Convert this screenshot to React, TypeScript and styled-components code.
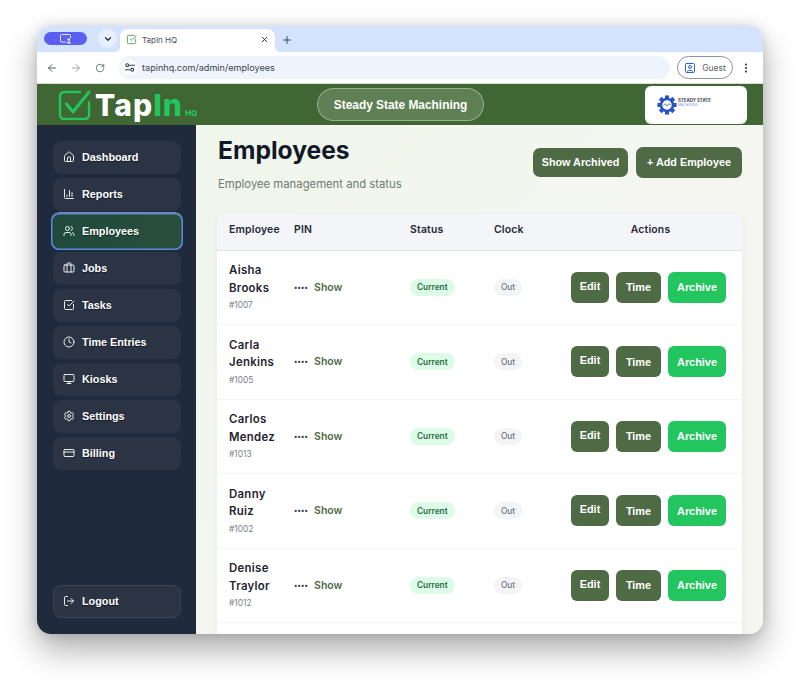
import React from 'react'
import styled, { createGlobalStyle } from 'styled-components'
import {
  ArrowLeft,
  ArrowRight,
  Briefcase,
  ChartColumn,
  ChevronDown,
  Clock,
  CreditCard,
  EllipsisVertical,
  House,
  LogOut,
  Monitor,
  Plus,
  RotateCw,
  Settings,
  SquareCheckBig,
  SquareUser,
  Users,
  X,
} from 'lucide-react'

const GlobalStyle = createGlobalStyle`
  html, body {
    margin: 0;
    padding: 0;
    background: #fff;
  }
  * {
    box-sizing: border-box;
  }
`

const Page = styled.div`
  width: 800px;
  height: 683px;
  padding: 26px 37px 49px;
  overflow: hidden;
  font-family: 'Liberation Sans', Arial, sans-serif;
`

const BrowserWindow = styled.div`
  width: 726px;
  height: 608px;
  border-radius: 14px;
  overflow: hidden;
  display: flex;
  flex-direction: column;
  box-shadow: 0 16px 32px rgba(0, 0, 0, 0.32), 0 0 12px rgba(0, 0, 0, 0.14);
`

const TabStrip = styled.div`
  height: 26px;
  flex: none;
  background: #d3e3fd;
  display: flex;
  align-items: flex-end;
  padding-left: 7px;
`

const ProfilePill = styled.div`
  width: 43px;
  height: 13px;
  margin-bottom: 7px;
  border-radius: 7px;
  background: #5b5ef0;
  display: flex;
  align-items: center;
  justify-content: center;
`

const TabSearch = styled.div`
  width: 19px;
  height: 19px;
  margin: 0 3px 4px 11px;
  border-radius: 50%;
  background: #e7effc;
  color: #1f2937;
  display: flex;
  align-items: center;
  justify-content: center;
`

const Tab = styled.div`
  position: relative;
  width: 155px;
  height: 23px;
  border-radius: 8px 8px 0 0;
  background: #fff;
  display: flex;
  align-items: center;
  padding: 0 6px 2px;
  color: #47505c;
  font-family: Inter, sans-serif;
  font-size: 8px;

  &::before,
  &::after {
    content: '';
    position: absolute;
    bottom: 0;
    width: 6px;
    height: 6px;
  }

  &::before {
    left: -6px;
    background: radial-gradient(circle at 0 0, transparent 6px, #fff 6.5px);
  }

  &::after {
    right: -6px;
    background: radial-gradient(circle at 100% 0, transparent 6px, #fff 6.5px);
  }
`

const TabTitle = styled.span`
  margin-left: 5px;
  flex: 1;
`

const NewTab = styled.div`
  margin: 0 0 6px 6px;
  height: 14px;
  color: #3c4657;
`

const Toolbar = styled.div`
  height: 31px;
  flex: none;
  background: #fff;
  display: flex;
  align-items: center;
  padding-left: 3px;
  color: #59616e;
`

const NavButton = styled.div<{ $dim?: boolean }>`
  width: 24px;
  display: flex;
  justify-content: center;
  opacity: ${(p) => (p.$dim ? 0.55 : 1)};
`

const Omnibox = styled.div`
  width: 551px;
  height: 23px;
  margin-left: 7px;
  border-radius: 12px;
  background: #eff3fb;
  display: flex;
  align-items: center;
  padding-left: 2px;
  gap: 4px;
  font-family: Inter, sans-serif;
  font-size: 9.1px;
  color: #3c4350;
`

const SiteIcon = styled.span`
  width: 17px;
  height: 17px;
  border-radius: 50%;
  background: #f8fafe;
  display: flex;
  align-items: center;
  justify-content: center;
`

const GuestChip = styled.div`
  width: 56px;
  height: 23px;
  margin-left: 7px;
  border: 1px solid #8d939c;
  border-radius: 12px;
  display: flex;
  align-items: center;
  justify-content: center;
  gap: 6px;
  font-family: Inter, sans-serif;
  font-size: 8.5px;
  color: #59616e;

  svg {
    color: #2b62d9;
  }
`

const MenuDots = styled.div`
  margin-left: 7px;
  display: flex;
  color: #3c4350;
`

const AppHeader = styled.header`
  height: 42px;
  flex: none;
  background: #3f6633;
  border-top: 1px solid #d7dcd4;
  display: grid;
  grid-template-columns: 259px 167px 1fr;
  grid-template-rows: 41px;
  align-items: center;
  padding-left: 21px;
`

const Brand = styled.div`
  display: flex;
  align-items: center;
  gap: 4px;
`

const BrandText = styled.div`
  font-family: Inter, sans-serif;
  font-weight: 800;
  font-size: 30px;
  line-height: 34px;
  height: 34px;
  letter-spacing: 1.1px;
  color: #fff;
  white-space: nowrap;
`

const BrandAccent = styled.span`
  color: #22c55e;
`

const BrandSuffix = styled.span`
  margin-left: 2px;
  color: #22c55e;
  font-size: 8px;
  line-height: 8px;
  letter-spacing: 0;
`

const CompanyPill = styled.div`
  height: 33px;
  border-radius: 17px;
  border: 1px solid rgba(255, 255, 255, 0.38);
  background: rgba(255, 255, 255, 0.17);
  color: #fff;
  font-weight: 700;
  font-size: 11.9px;
  display: flex;
  align-items: center;
  justify-content: center;
`

const CompanyCard = styled.div`
  justify-self: end;
  width: 102px;
  height: 38px;
  margin-right: 16px;
  border-radius: 6px;
  background: #fff;
  display: flex;
  align-items: center;
  padding-left: 12px;
  gap: 1px;
`

const CompanyName = styled.div`
  font-family: Inter, sans-serif;
  font-size: 4.4px;
  line-height: 5px;
  font-weight: 700;
  color: #3c4250;
  white-space: nowrap;
`

const CompanySub = styled.div`
  font-size: 3.2px;
  line-height: 5px;
  color: #6f8fee;
  letter-spacing: 0.2px;
  margin-bottom: 3px;
`

const Body = styled.div`
  flex: 1;
  min-height: 0;
  display: flex;
`

const Sidebar = styled.nav`
  width: 159px;
  flex: none;
  background: #1f2a3c;
  display: flex;
  flex-direction: column;
  padding: 16px 15px 16px 16px;
`

const NavList = styled.div`
  display: flex;
  flex-direction: column;
  gap: 4px;
`

const NavItem = styled.div<{ $active?: boolean }>`
  height: 33px;
  border-radius: 8px;
  display: flex;
  align-items: center;
  gap: 7px;
  padding: 0 0 1px 10px;
  color: #fff;
  font-weight: 700;
  font-size: 10.8px;
  text-shadow: 0 1px 1px rgba(0, 0, 0, 0.5);
  background: #2a3445;
  ${(p) =>
    p.$active
      ? `
    background: linear-gradient(100deg, #1f4a3d, #2a4f3b);
    height: 37px;
    margin: -2px;
    padding-left: 12px;
    box-shadow: inset 0 0 0 1.5px #5b8ae0, 0 -0.5px 0 #dfe8f5;
  `
      : ''}
`

const LogoutItem = styled(NavItem)`
  margin-top: auto;
  border: 1px solid #3b4657;
  padding-left: 9px;
`

const Main = styled.main`
  flex: 1;
  min-width: 0;
  overflow: hidden;
  background: linear-gradient(135deg, #eff6ea, #f5f6f2 50%);
  padding: 0 21px;
`

const TitleRow = styled.div`
  display: flex;
  justify-content: space-between;
  align-items: flex-start;
  height: 88.5px;
`

const Title = styled.h1`
  margin: 9px 0 0 1px;
  font-family: Inter, sans-serif;
  font-size: 24.6px;
  line-height: 32px;
  font-weight: 700;
  color: #111827;
`

const Subtitle = styled.p`
  margin: 10px 0 0 1px;
  font-family: Inter, sans-serif;
  font-size: 11.3px;
  line-height: 16px;
  color: #6f7a70;
`

const HeaderActions = styled.div`
  display: flex;
  align-items: center;
  gap: 8px;
  margin-top: 22px;
`

const PrimaryButton = styled.button<{ $large?: boolean }>`
  border: 0;
  border-radius: 7px;
  background: #4f6b46;
  color: #fff;
  font-family: 'Liberation Sans', Arial, sans-serif;
  font-weight: 700;
  font-size: 10.8px;
  height: ${(p) => (p.$large ? 31 : 29)}px;
  width: ${(p) => (p.$large ? 106 : 95)}px;
  padding: 0 0 2px;
`

const Table = styled.div`
  background: #fff;
  border-radius: 8px 8px 0 0;
  min-height: 600px;
  box-shadow: 0 2px 8px rgba(0, 0, 0, 0.05);
`

const TableGrid = styled.div`
  display: grid;
  grid-template-columns: 65px 116px 84px 65px 1fr;
  align-items: center;
  padding-left: 12px;
`

const HeadRow = styled(TableGrid)`
  height: 37px;
  padding-bottom: 5px;
  background: #f3f5f8;
  border-bottom: 1px solid #e2e5e9;
  border-radius: 8px 8px 0 0;
  font-family: Inter, sans-serif;
  font-size: 10.4px;
  letter-spacing: 0.2px;
  font-weight: 600;
  color: #1f2937;
`

const ActionsHead = styled.div`
  text-align: center;
`

const Row = styled(TableGrid)`
  height: 74.5px;
  border-bottom: 1px solid #f4f5f6;
`

const Name = styled.div`
  font-family: Inter, sans-serif;
  font-size: 11.4px;
  line-height: 17.5px;
  letter-spacing: 0.3px;
  font-weight: 600;
  color: #1f2430;
`

const EmployeeId = styled.div`
  font-family: Inter, sans-serif;
  font-size: 8.4px;
  line-height: 13px;
  margin-top: 2px;
  color: #7a808a;
`

const Pin = styled.div`
  display: flex;
  align-items: center;
  gap: 6px;
  font-family: Inter, sans-serif;
  font-size: 10.5px;
  font-weight: 600;
  color: #4f6b46;
`

const PinDots = styled.span`
  color: #374151;
  font-size: 7px;
  font-weight: 700;
  letter-spacing: 0.2px;
`

const Badge = styled.span<{ $tone: 'green' | 'gray' }>`
  display: inline-flex;
  align-items: center;
  height: 17px;
  padding: 0 7px;
  border-radius: 9px;
  font-family: Inter, sans-serif;
  font-size: 8.3px;
  font-weight: ${(p) => (p.$tone === 'green' ? 600 : 500)};
  background: ${(p) => (p.$tone === 'green' ? '#dcfce7' : '#f3f4f6')};
  color: ${(p) => (p.$tone === 'green' ? '#2f6b45' : '#6b7280')};
`

const BadgeCell = styled.div`
  display: flex;
`

const Actions = styled.div`
  display: flex;
  gap: 7px;
  padding-left: 12px;
`

const RowButton = styled.button<{ $green?: boolean; $width: number; $raised?: boolean }>`
  width: ${(p) => p.$width}px;
  height: 31px;
  border: 0;
  border-radius: 6px;
  background: ${(p) => (p.$green ? '#22c55e' : '#4f6b46')};
  color: #fff;
  font-family: 'Liberation Sans', Arial, sans-serif;
  font-weight: 700;
  font-size: 10.9px;
  padding: 0 0 ${(p) => (p.$raised ? 3 : 0)}px;
`

const LogoMark = () => (
  <svg width="33" height="30" viewBox="0 0 33 30" fill="none" stroke="#22c55e" strokeWidth="2.4" strokeLinecap="round" strokeLinejoin="round">
    <path d="M22 2H6a4 4 0 0 0-4 4v19a4 4 0 0 0 4 4h21a4 4 0 0 0 4-4V12" />
    <path d="M8.500 14l6.500 8L31 2" strokeWidth="3" />
  </svg>
)

const GearLogo = () => (
  <svg width="20" height="20" viewBox="0 0 24 24">
    <g fill="#2b55c4">
      {[0, 45, 90, 135, 180, 225, 270, 315].map((a) => (
        <rect key={a} x="9.600" y="0.500" width="4.800" height="5" transform={`rotate(${a} 12 12)`} />
      ))}
    </g>
    <circle cx="12" cy="12" r="7.200" fill="#fff" stroke="#2b55c4" strokeWidth="3" />
    <path d="M7.500 12.500l2.500-2 2 3 2-3 2.500 1.500" fill="none" stroke="#5b6b8c" strokeWidth="1" />
  </svg>
)

const ProfileIcon = () => (
  <svg width="13" height="10" viewBox="0 0 13 10" fill="none" stroke="#e6e8ff" strokeWidth="1">
    <path d="M7 8H2.500a1 1 0 0 1-1-1V1.500a1 1 0 0 1 1-1h8a1 1 0 0 1 1 1V4" />
    <circle cx="9.800" cy="5.600" r="1.300" fill="#e6e8ff" stroke="none" />
    <path d="M7.800 9.500c0-1.300 1-1.900 2-1.900s2 .6 2 1.900z" fill="#e6e8ff" stroke="none" />
  </svg>
)

const TuneIcon = () => (
  <svg width="10" height="9" viewBox="0 0 10 9" fill="none" stroke="#3c4350" strokeWidth="1.100" strokeLinecap="round">
    <path d="M4.500 2.200H9.500M.500 6.800H5" />
    <circle cx="2.200" cy="2.200" r="1.400" />
    <circle cx="7.300" cy="6.800" r="1.400" />
  </svg>
)

const navItems = [
  { label: 'Dashboard', icon: House },
  { label: 'Reports', icon: ChartColumn },
  { label: 'Employees', icon: Users, active: true },
  { label: 'Jobs', icon: Briefcase },
  { label: 'Tasks', icon: SquareCheckBig },
  { label: 'Time Entries', icon: Clock },
  { label: 'Kiosks', icon: Monitor },
  { label: 'Settings', icon: Settings },
  { label: 'Billing', icon: CreditCard },
]

const employees = [
  { first: 'Aisha', last: 'Brooks', id: '#1007' },
  { first: 'Carla', last: 'Jenkins', id: '#1005' },
  { first: 'Carlos', last: 'Mendez', id: '#1013' },
  { first: 'Danny', last: 'Ruiz', id: '#1002' },
  { first: 'Denise', last: 'Traylor', id: '#1012' },
]

const App = () => {
  return (
    <Page>
      <GlobalStyle />
      <BrowserWindow>
        <TabStrip>
          <ProfilePill>
            <ProfileIcon />
          </ProfilePill>
          <TabSearch>
            <ChevronDown size={10} strokeWidth={3} />
          </TabSearch>
          <Tab>
            <SquareCheckBig size={11} color="#5b9a5b" />
            <TabTitle>TapIn HQ</TabTitle>
            <X size={9} color="#1f2937" strokeWidth={2.5} />
          </Tab>
          <NewTab>
            <Plus size={12} />
          </NewTab>
        </TabStrip>
        <Toolbar>
          <NavButton>
            <ArrowLeft size={12} />
          </NavButton>
          <NavButton $dim>
            <ArrowRight size={12} />
          </NavButton>
          <NavButton>
            <RotateCw size={10} />
          </NavButton>
          <Omnibox>
            <SiteIcon>
              <TuneIcon />
            </SiteIcon>
            tapinhq.com/admin/employees
          </Omnibox>
          <GuestChip>
            <SquareUser size={12} />
            Guest
          </GuestChip>
          <MenuDots>
            <EllipsisVertical size={12} strokeWidth={2.5} />
          </MenuDots>
        </Toolbar>
        <AppHeader>
          <Brand>
            <LogoMark />
            <BrandText>
              Tap<BrandAccent>In</BrandAccent>
              <BrandSuffix>HQ</BrandSuffix>
            </BrandText>
          </Brand>
          <CompanyPill>Steady State Machining</CompanyPill>
          <CompanyCard>
            <GearLogo />
            <div>
              <CompanyName>STEADY STATE</CompanyName>
              <CompanySub>MACHINING</CompanySub>
            </div>
          </CompanyCard>
        </AppHeader>
        <Body>
          <Sidebar>
            <NavList>
              {navItems.map((item) => (
                <NavItem key={item.label} $active={item.active}>
                  <item.icon size={12} strokeWidth={1.8} />
                  {item.label}
                </NavItem>
              ))}
            </NavList>
            <LogoutItem>
              <LogOut size={12} strokeWidth={1.8} />
              Logout
            </LogoutItem>
          </Sidebar>
          <Main>
            <TitleRow>
              <div>
                <Title>Employees</Title>
                <Subtitle>Employee management and status</Subtitle>
              </div>
              <HeaderActions>
                <PrimaryButton>Show Archived</PrimaryButton>
                <PrimaryButton $large>+ Add Employee</PrimaryButton>
              </HeaderActions>
            </TitleRow>
            <Table>
              <HeadRow>
                <div>Employee</div>
                <div>PIN</div>
                <div>Status</div>
                <div>Clock</div>
                <ActionsHead>Actions</ActionsHead>
              </HeadRow>
              {employees.map((emp) => (
                <Row key={emp.id}>
                  <div>
                    <Name>
                      {emp.first}
                      <br />
                      {emp.last}
                    </Name>
                    <EmployeeId>{emp.id}</EmployeeId>
                  </div>
                  <Pin>
                    <PinDots>••••</PinDots>
                    Show
                  </Pin>
                  <BadgeCell>
                    <Badge $tone="green">Current</Badge>
                  </BadgeCell>
                  <BadgeCell>
                    <Badge $tone="gray">Out</Badge>
                  </BadgeCell>
                  <Actions>
                    <RowButton $width={38} $raised>
                      Edit
                    </RowButton>
                    <RowButton $width={45}>Time</RowButton>
                    <RowButton $width={58} $green>
                      Archive
                    </RowButton>
                  </Actions>
                </Row>
              ))}
            </Table>
          </Main>
        </Body>
      </BrowserWindow>
    </Page>
  )
}

export default App
